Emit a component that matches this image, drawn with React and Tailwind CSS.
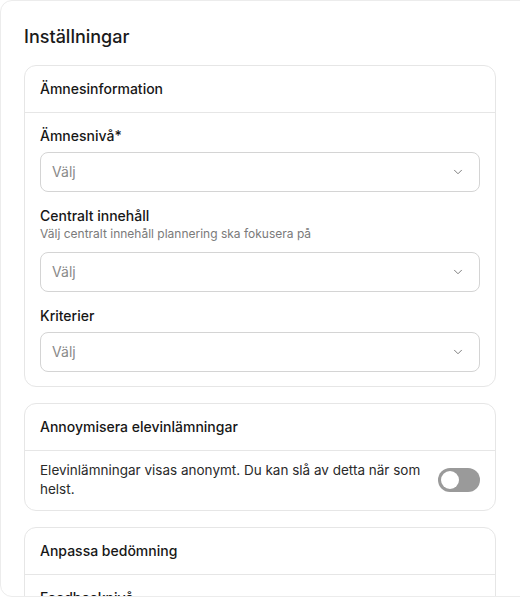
import { ChevronDown } from 'lucide-react'

function Select({ placeholder = 'Välj' }) {
  return (
    <div className="h-10 w-full rounded-lg border border-[#d4d4d4] bg-white pl-[11px] pr-3.5 flex items-center justify-between">
      <span className="text-sm text-[#8a8a8a]">{placeholder}</span>
      <ChevronDown size={14} strokeWidth={1.5} className="text-[#6b6b6b]" />
    </div>
  )
}

function Card({ title, children }) {
  return (
    <div className="rounded-xl border border-[#e6e6e6] bg-white">
      <div className="px-[15px] py-[13px] border-b border-[#e6e6e6]">
        <h2 className="text-sm font-medium text-[#171717]">{title}</h2>
      </div>
      {children}
    </div>
  )
}

export default function App() {
  return (
    <div className="h-[597px] w-full bg-white overflow-hidden" style={{ fontFamily: 'Inter, "Noto Sans", sans-serif' }}>
      <div className="h-full w-[540px] rounded-xl border border-[#ececec] overflow-hidden pl-[23px] pr-[43px] pt-[22px]">
        <h1 className="text-lg font-medium text-[#1a1a1a] mb-[14px]">Inställningar</h1>

        <div className="space-y-4">
          {/* Ämnesinformation */}
          <Card title="Ämnesinformation">
            <div className="px-[15px] pt-[13px] pb-[14px] space-y-[14px]">
              <div>
                <p className="text-sm font-medium text-[#171717] mb-1.5">Ämnesnivå*</p>
                <Select />
              </div>
              <div>
                <p className="text-sm font-medium text-[#171717]">Centralt innehåll</p>
                <p className="text-xs text-[#7a7a7a] mb-2.5">Välj centralt innehåll plannering ska fokusera på</p>
                <Select />
              </div>
              <div>
                <p className="text-sm font-medium text-[#171717] mb-1.5">Kriterier</p>
                <Select />
              </div>
            </div>
          </Card>

          {/* Anonymisering */}
          <Card title="Annoymisera elevinlämningar">
            <div className="px-[15px] pt-2.5 pb-[11px] flex items-center gap-3">
              <p className="text-[13.5px] text-[#2a2a2a] leading-[19px] flex-1">
                Elevinlämningar visas anonymt. Du kan slå av detta när som helst.
              </p>
              <div className="w-[42px] h-6 rounded-full bg-[#9a9a9a] p-[3px] flex items-center shrink-0">
                <div className="w-[18px] h-[18px] rounded-full bg-white" />
              </div>
            </div>
          </Card>

          {/* Bedömning */}
          <Card title="Anpassa bedömning">
            <div className="px-[15px] pt-[13px] pb-4">
              <p className="text-sm font-medium text-[#171717] mb-1.5">Feedbacknivå</p>
              <Select />
            </div>
          </Card>
        </div>
      </div>
    </div>
  )
}
